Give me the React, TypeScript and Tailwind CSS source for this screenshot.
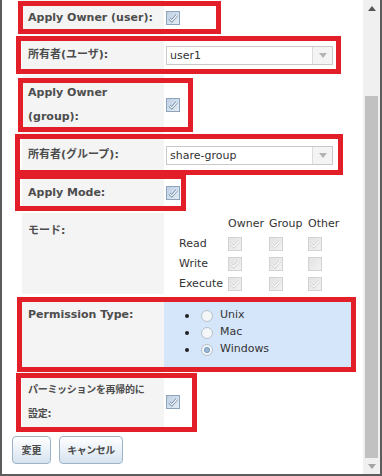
import type { ReactNode } from 'react';

const font = "font-['DejaVu_Sans','Noto_Sans_CJK_JP',sans-serif]";

function Check({ checked = true, disabled = false }: { checked?: boolean; disabled?: boolean }) {
  const id = disabled ? 'cbd' : 'cbe';
  return (
    <svg width="14" height="14" viewBox="0 0 14 14" className="shrink-0">
      <defs>
        <linearGradient id={id} x1="0" y1="0" x2="1" y2="1">
          <stop offset="0" stopColor={disabled ? '#e2e2e2' : '#bccfe2'} />
          <stop offset="1" stopColor={disabled ? '#f2f2f2' : '#e6eef6'} />
        </linearGradient>
      </defs>
      <rect x="0.5" y="0.5" width="13" height="13" fill={`url(#${id})`} stroke={disabled ? '#d2d2d2' : '#8ea4ba'} />
      {checked && (
        <>
          <path d="M3.3 7.4 L5.8 9.9 L10.8 4.2" fill="none" stroke={disabled ? '#c9c9c9' : '#5d7d9e'} strokeWidth="2.6" />
          <path d="M3.3 7.4 L5.8 9.9 L10.8 4.2" fill="none" stroke="#ffffff" strokeWidth="1.3" />
        </>
      )}
    </svg>
  );
}

function Radio({ selected = false }: { selected?: boolean }) {
  return (
    <svg width="12" height="12" viewBox="0 0 12 12" className="shrink-0">
      <circle cx="6" cy="6" r="5.5" fill="#f4f6f8" stroke="#b4c0cb" />
      {selected && <circle cx="6" cy="6" r="2.6" fill="#9bb8d4" stroke="#6f93b7" strokeWidth="0.9" />}
    </svg>
  );
}

function Select({ value }: { value: string }) {
  return (
    <div className="flex h-[19px] w-[167px] items-stretch border border-[#c9c9c9] bg-white">
      <span className="flex-1 pl-[3px] text-[11px] leading-[17px] text-[#333]">{value}</span>
      <span className="flex w-[20px] items-center justify-center border-l border-[#dcdcdc] bg-[#f4f4f4]">
        <svg width="8" height="5" viewBox="0 0 8 5">
          <polygon points="0,0 8,0 4,5" fill="#b3b3b3" />
        </svg>
      </span>
    </div>
  );
}

function Row({
  label,
  height,
  top = false,
  children,
  valueClass = 'items-center',
}: {
  label: ReactNode;
  height: number;
  top?: boolean;
  children: ReactNode;
  valueClass?: string;
}) {
  return (
    <div className="flex" style={{ height }}>
      <div
        className={`flex w-[142px] bg-[#f4f4f4] pl-[6px] text-[11px] font-bold leading-[24px] text-[#4d4d4d] ${
          top ? 'items-start pt-[6px]' : 'items-center'
        }`}
      >
        <span>{label}</span>
      </div>
      <div className={`flex flex-1 pl-[2px] ${valueClass}`}>{children}</div>
    </div>
  );
}

// red annotation frames drawn over the form
const boxes = [
  { l: 16, t: 1, w: 203, h: 33 },
  { l: 14, t: 36, w: 325, h: 38 },
  { l: 16, t: 78, w: 175, h: 54 },
  { l: 13, t: 134, w: 328, h: 41 },
  { l: 13, t: 174, w: 171, h: 37 },
  { l: 15, t: 297, w: 339, h: 75 },
  { l: 14, t: 373, w: 181, h: 59 },
];

const perms = [
  { name: 'Read', v: [true, true, true] },
  { name: 'Write', v: [true, true, false] },
  { name: 'Execute', v: [true, true, true] },
];

export default function App() {
  return (
    <div className={`flex h-[476px] w-[382px] overflow-hidden border-x-2 border-b-2 border-[#5c5c5c] bg-white ${font}`}>
      <div className="relative flex-1">
        <div className="ml-[20px] flex w-[330px] flex-col gap-[3px]">
          <Row label="Apply Owner (user):" height={35}>
            <Check />
          </Row>
          <Row label="所有者(ユーザ):" height={34}>
            <Select value="user1" />
          </Row>
          <Row label={<>Apply Owner<br />(group):</>} height={60} top>
            <Check />
          </Row>
          <Row label="所有者(グループ):" height={34}>
            <Select value="share-group" />
          </Row>
          <Row label="Apply Mode:" height={35}>
            <Check />
          </Row>
          <Row label="モード:" height={81} top valueClass="items-start">
            <div className="grid grid-cols-[49px_41px_39px_40px] pl-[13px] pt-[1px] text-[11px] text-[#333]">
              <span className="h-[20px]" />
              <span className="h-[20px] leading-[20px]">Owner</span>
              <span className="h-[20px] leading-[20px]">Group</span>
              <span className="h-[20px] leading-[20px]">Other</span>
              {perms.map((p) => (
                <>
                  <span key={p.name} className="h-[20px] leading-[20px]">{p.name}</span>
                  {p.v.map((c, i) => (
                    <span key={p.name + i} className="flex h-[20px] items-center">
                      <Check checked={c} disabled />
                    </span>
                  ))}
                </>
              ))}
            </div>
          </Row>
          <Row label="Permission Type:" height={72} top valueClass="items-start bg-[#d6e6fa]">
            <ul className="pl-[19px] pt-[10px] text-[11px] text-[#333]">
              {['Unix', 'Mac', 'Windows'].map((t) => (
                <li key={t} className="flex h-[17px] items-center">
                  <span className="h-[4px] w-[4px] rounded-full bg-[#222]" />
                  <span className="ml-[12px]">
                    <Radio selected={t === 'Windows'} />
                  </span>
                  <span className="ml-[7px]">{t}</span>
                </li>
              ))}
            </ul>
          </Row>
          <Row
            label={
              <span className="text-[10px] tracking-[-0.3px]">
                パーミッションを再帰的に
                <br />
                設定:
              </span>
            }
            height={60}
            top
          >
            <Check />
          </Row>
        </div>

        <div className="ml-[10px] mt-[4px] flex gap-[8px]">
          <button className="h-[28px] w-[39px] rounded-[4px] border border-[#9fb3c7] bg-gradient-to-b from-white to-[#d6e3f0] text-[10px] font-bold text-[#4a4a4a]">
            変更
          </button>
          <button className="h-[28px] w-[64px] rounded-[4px] border border-[#9fb3c7] bg-gradient-to-b from-white to-[#d6e3f0] text-[10px] font-bold tracking-[-0.5px] text-[#4a4a4a]">
            キャンセル
          </button>
        </div>

        {boxes.map((b, i) => (
          <div
            key={i}
            className="pointer-events-none absolute border-[5px] border-[#e21f29]"
            style={{ left: b.l, top: b.t, width: b.w, height: b.h }}
          />
        ))}
      </div>

      <div className="flex w-[17px] flex-col bg-[#f0f0f0]">
        <div className="flex h-[17px] items-center justify-center">
          <svg width="8" height="5" viewBox="0 0 8 5">
            <polygon points="0,5 8,5 4,0" fill="#555" />
          </svg>
        </div>
        <div className="h-[79px]" />
        <div className="mx-[2px] h-[362px] bg-[#c1c1c1]" />
        <div className="flex flex-1 items-center justify-center">
          <svg width="8" height="5" viewBox="0 0 8 5">
            <polygon points="0,0 8,0 4,5" fill="#a3a3a3" />
          </svg>
        </div>
      </div>
    </div>
  );
}
